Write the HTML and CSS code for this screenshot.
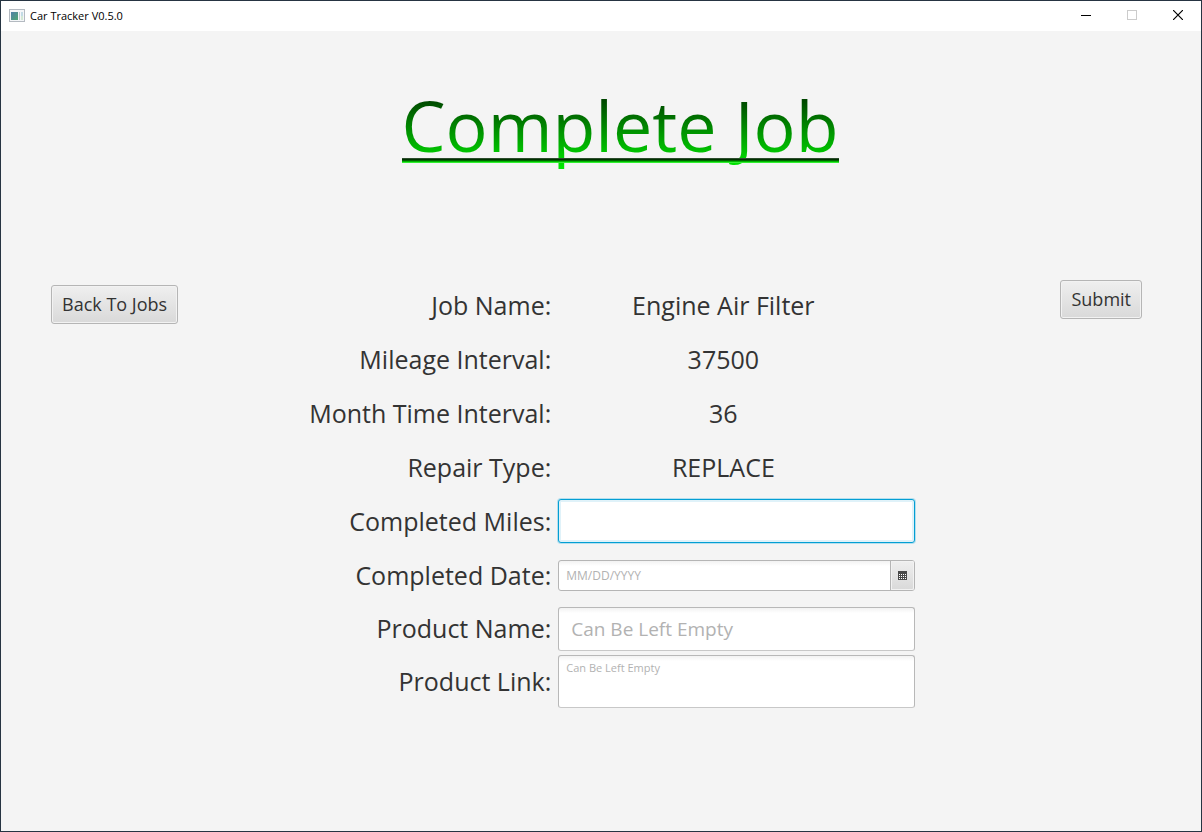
FILE: index.html
```html
<!DOCTYPE html>
<html lang="en">
<head>
<meta charset="utf-8">
<title>Car Tracker V0.5.0</title>
<link rel="stylesheet" href="styles.css">
</head>
<body>
<div class="window">
  <header class="titlebar">
    <svg class="app-icon" width="16" height="14" viewBox="0 0 16 14" aria-hidden="true">
      <defs><linearGradient id="pane" x1="0" y1="0" x2="1" y2="1"><stop offset="0" stop-color="#4f7fa8"/><stop offset="1" stop-color="#4fa673"/></linearGradient></defs>
      <rect x=".5" y=".5" width="15" height="12" fill="#f4f6f8" stroke="#b4bac1"/>
      <rect x="2" y="3" width="7" height="8" fill="url(#pane)"/>
      <rect x="10" y="3" width="1" height="8" fill="#c5ccd2"/>
      <rect x="12" y="3" width="2" height="4" fill="#c3dbe6"/>
      <rect x="12" y="7" width="2" height="4" fill="#d3e8d4"/>
    </svg>
    <span class="app-name">Car Tracker V0.5.0</span>
    <div class="window-controls">
      <button class="control" type="button" aria-label="Minimize"><svg width="10" height="10" viewBox="0 0 10 10"><path d="M0 5.5h10" stroke="#000"/></svg></button>
      <button class="control" type="button" aria-label="Maximize" disabled><svg width="10" height="10" viewBox="0 0 10 10"><rect x=".5" y=".5" width="9" height="9" fill="none" stroke="#ccc"/></svg></button>
      <button class="control" type="button" aria-label="Close"><svg width="10" height="10" viewBox="0 0 10 10"><path d="M0 0l10 10M10 0L0 10" stroke="#000" stroke-width="1.2"/></svg></button>
    </div>
  </header>
  <h1 class="heading"><span class="heading-text">Complete Job</span></h1>
  <main class="content">
    <button class="button back" type="button">Back To Jobs</button>
    <form class="form" id="job">
      <span class="label">Job Name:</span><span class="value">Engine Air Filter</span>
      <span class="label">Mileage Interval:</span><span class="value">37500</span>
      <span class="label">Month Time Interval:</span><span class="value">36</span>
      <span class="label">Repair Type:</span><span class="value">REPLACE</span>
      <label class="label" for="miles">Completed Miles:</label>
      <input class="field large focused" id="miles" type="text">
      <label class="label" for="date">Completed Date:</label>
      <div class="field date-picker">
        <input class="date-input" id="date" type="text" placeholder="MM/DD/YYYY">
        <button class="date-button" type="button" aria-label="Choose date">
          <svg width="9" height="9" viewBox="0 0 9 9"><path fill="#4a4a4a" d="M0 0h9v9H0z"/><path d="M1 3.5h7M1 5.5h7M1 7.5h7" stroke="#fff" stroke-dasharray="1 1"/></svg>
        </button>
      </div>
      <label class="label" for="product">Product Name:</label>
      <input class="field large" id="product" type="text" placeholder="Can Be Left Empty">
      <label class="label" for="link">Product Link:</label>
      <textarea class="field area" id="link" placeholder="Can Be Left Empty"></textarea>
    </form>
    <button class="button submit" type="submit" form="job">Submit</button>
  </main>
</div>
</body>
</html>
```
FILE: styles.css
```css
* { box-sizing: border-box; }

body {
  margin: 0;
  font-family: "Open Sans", "Noto Sans", sans-serif;
  color: #333;
}

.window {
  min-height: 100vh;
  background: #f4f4f4;
  border: 1px solid #263442;
}

.titlebar {
  display: flex;
  align-items: center;
  height: 30px;
  padding-left: 8px;
  background: #fff;
}

.app-name {
  margin-left: 5px;
  padding-bottom: 2px;
  font-size: 11px;
  color: #000;
}

.window-controls {
  display: flex;
  align-self: stretch;
  margin-left: auto;
}

.control {
  display: grid;
  place-items: center;
  width: 46px;
  padding: 0 0 2px;
  border: 0;
  background: none;
}

.heading {
  margin: 0;
  padding: 46px 0 0 38px;
  text-align: center;
  font-size: 70px;
  font-weight: 400;
  line-height: 96px;
}

.heading-text {
  position: relative;
  display: inline-block;
  background: linear-gradient(#001000, #00e800 94%);
  background-clip: text;
  -webkit-background-clip: text;
  color: transparent;
}

.heading-text::after {
  content: "";
  position: absolute;
  left: 0;
  right: 0;
  top: 81px;
  height: 5px;
  background: linear-gradient(#2c4c2c 20%, #003000 20% 40%, #006400 40% 60%, #00b400 60% 80%, #30f030 80%);
}

.content {
  display: grid;
  grid-template-columns: auto 1fr auto;
  align-items: start;
  padding: 105px 59px 0 50px;
}

.button {
  height: 39px;
  padding: 0 10px 2px;
  border: 1px solid #b5b5b5;
  border-radius: 3px;
  background: linear-gradient(#efefef, #d9d9d9);
  box-shadow: inset 0 0 0 1px #f2f2f2;
  font: inherit;
  font-size: 18px;
  color: #333;
}

.back { margin-top: 7px; }
.submit { margin-top: 2px; }

.form {
  display: grid;
  grid-template-columns: 373fr 357fr;
  grid-template-rows: repeat(6, 54px) 53px 53px;
  column-gap: 7px;
  align-items: center;
  padding-right: 145px;
}

.label,
.value {
  padding-bottom: 1px;
  font-size: 25px;
  line-height: 34px;
  white-space: nowrap;
}

.label { text-align: right; }

.value {
  padding-right: 27px;
  text-align: center;
}

.field {
  width: 100%;
  min-width: 0;
  border: 1px solid #b8b8b8;
  border-bottom-color: #c8c8c8;
  border-radius: 3px;
  background: linear-gradient(#f2f2f2, #fff 5px);
  font: inherit;
  color: #333;
  outline: 0;
}

.large {
  height: 44px;
  padding: 0 12px;
  font-size: 19px;
}

.focused {
  border-color: #039ed3;
  background: #fff;
  box-shadow: 0 0 0 1px #b5dfee, inset 0 0 0 2px #e0f2f9;
}

.date-picker {
  display: flex;
  height: 31px;
  border-color: #b5b5b5;
}

.date-input {
  flex: 1;
  min-width: 0;
  padding: 0 7px;
  border: 0;
  background: none;
  font: inherit;
  font-size: 12px;
  outline: 0;
}

.date-button {
  display: grid;
  place-items: center;
  width: 24px;
  padding: 0;
  border: 0;
  border-left: 1px solid #b5b5b5;
  border-radius: 0 2px 2px 0;
  background: linear-gradient(#efefef, #d9d9d9);
  box-shadow: inset 0 0 0 1px #f2f2f2;
}

.area {
  display: block;
  height: 53px;
  padding: 3px 7px;
  font-size: 12px;
  line-height: 17px;
  resize: none;
}

.area::placeholder { font-size: 11px; }

::placeholder {
  color: #b2b2b2;
  opacity: 1;
}
```
